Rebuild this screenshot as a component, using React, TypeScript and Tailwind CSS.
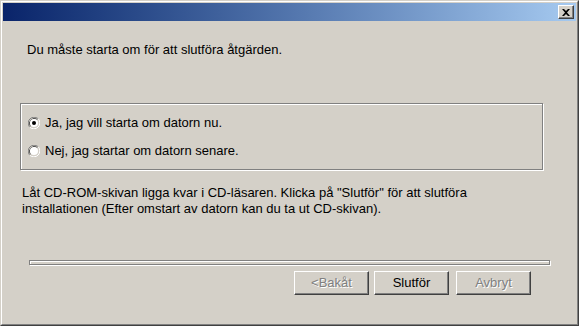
const Radio = ({ checked }: { checked: boolean }) => (
   <svg width="12" height="12" viewBox="0 0 12 12" className="shrink-0">
      <path d="M10.24 1.76 A6 6 0 0 0 1.76 10.24" fill="none" stroke="#808080" strokeWidth="1" />
      <path d="M9.5 2.5 A5 5 0 0 0 2.5 9.5" fill="none" stroke="#404040" strokeWidth="1" />
      <path d="M1.76 10.24 A6 6 0 0 0 10.24 1.76" fill="none" stroke="#ffffff" strokeWidth="1" />
      <path d="M2.5 9.5 A5 5 0 0 0 9.5 2.5" fill="none" stroke="#d4d0c8" strokeWidth="1" />
      <circle cx="6" cy="6" r="4" fill="#ffffff" />
      {checked && <circle cx="6" cy="6" r="2" fill="#000000" />}
   </svg>
);

const Button = ({ label, disabled }: { label: string; disabled?: boolean }) => (
   <div className="w-[75px] h-[24px] bg-[#d4d0c8] border-t border-l border-white border-b border-r border-b-[#404040] border-r-[#404040] shadow-[inset_-1px_-1px_0_#808080] flex items-center justify-center">
      <span
         className={
            disabled
               ? "text-[#808080] [text-shadow:1px_1px_0_#ffffff]"
               : "text-black"
         }
      >
         {label}
      </span>
   </div>
);

export default function App() {
   return (
      <div className="w-[579px] h-[326px] bg-[#d4d0c8] border border-[#d4d0c8] border-b-[#404040] border-r-[#404040] font-['Liberation_Sans',Arial,sans-serif] text-[13px] leading-[16px] text-black">
         <div className="w-full h-full border border-white border-b-[#808080] border-r-[#808080] p-px flex flex-col">
            {/* title bar */}
            <div className="h-[18px] shrink-0 bg-gradient-to-r from-[#0a246a] to-[#a6caf0] flex items-center justify-end pr-[2px]">
               <div className="w-[16px] h-[14px] bg-[#d4d0c8] border-t border-l border-white border-b border-r border-b-[#404040] border-r-[#404040] shadow-[inset_-1px_-1px_0_#808080] flex items-center justify-center">
                  <svg width="8" height="7" viewBox="0 0 8 7">
                     <path d="M0 0h2l2 2 2-2h2L5 3.5 8 7H6L4 5 2 7H0l3-3.5z" fill="#000" />
                  </svg>
               </div>
            </div>

            {/* body */}
            <div className="flex-1 flex flex-col">
               <p className="mt-[21px] ml-[24px]">Du måste starta om för att slutföra åtgärden.</p>

               <div className="mt-[45px] ml-[17px] w-[523px] h-[67px] border border-[#808080] shadow-[inset_1px_1px_0_#ffffff,1px_1px_0_#ffffff] flex flex-col pl-[7px] pt-[11px] gap-[12px]">
                  <div className="flex items-center gap-[5px]">
                     <Radio checked />
                     <span>Ja, jag vill starta om datorn nu.</span>
                  </div>
                  <div className="flex items-center gap-[5px]">
                     <Radio checked={false} />
                     <span>Nej, jag startar om datorn senare.</span>
                  </div>
               </div>

               <p className="mt-[15px] ml-[19px] w-[470px]">
                  Låt CD-ROM-skivan ligga kvar i CD-läsaren. Klicka på "Slutför" för att slutföra installationen (Efter omstart av datorn kan du ta ut CD-skivan).
               </p>

               <div className="mt-[43px] ml-[26px] w-[521px] h-[5px] border border-[#808080] shadow-[inset_1px_1px_0_#ffffff,1px_1px_0_#ffffff]" />

               <div className="mt-[6px] ml-[291px] flex gap-[5px]">
                  <Button label="<Bakåt" disabled />
                  <div className="mr-[2px]">
                     <Button label="Slutför" />
                  </div>
                  <Button label="Avbryt" disabled />
               </div>
            </div>
         </div>
      </div>
   );
}
